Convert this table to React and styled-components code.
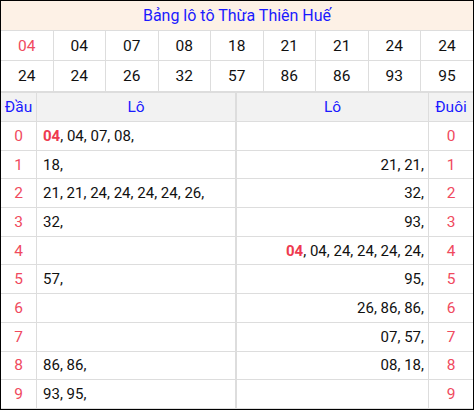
import styled, { createGlobalStyle } from "styled-components";

const GlobalStyle = createGlobalStyle`
  body {
    margin: 0;
    background: #fff;
    font-family: Roboto, "Liberation Sans", Arial, sans-serif;
  }
`;

const numbers = [
  ["04", "04", "07", "08", "18", "21", "21", "24", "24"],
  ["24", "24", "26", "32", "57", "86", "86", "93", "95"],
];

const hot = { v: "04", hot: true };

const rows = [
  { dau: [hot, "04", "07", "08"], duoi: [] },
  { dau: ["18"], duoi: ["21", "21"] },
  { dau: ["21", "21", "24", "24", "24", "24", "26"], duoi: ["32"] },
  { dau: ["32"], duoi: ["93"] },
  { dau: [], duoi: [hot, "04", "24", "24", "24", "24"] },
  { dau: ["57"], duoi: ["95"] },
  { dau: [], duoi: ["26", "86", "86"] },
  { dau: [], duoi: ["07", "57"] },
  { dau: ["86", "86"], duoi: ["08", "18"] },
  { dau: ["93", "95"], duoi: [] },
];

const LotoList = ({ items }) => (
  <span>
    {items.map((it, i) => {
      const v = typeof it === "string" ? it : it.v;
      return (
        <span key={i}>
          {it.hot ? <Hot>{v}</Hot> : v},{i < items.length - 1 ? " " : ""}
        </span>
      );
    })}
  </span>
);

const App = () => {
  return (
    <Frame>
      <GlobalStyle />
      <Title>Bảng lô tô Thừa Thiên Huế</Title>
      <NumberGrid>
        {numbers.flat().map((n, i) => (
          <NumCell key={i} $first={i === 0} $lastCol={i % 9 === 8}>
            {n}
          </NumCell>
        ))}
      </NumberGrid>
      <LotoGrid>
        <HeadCell>Đầu</HeadCell>
        <HeadCell>Lô</HeadCell>
        <HeadCell $split>Lô</HeadCell>
        <HeadCell $last>Đuôi</HeadCell>
        {rows.map((r, i) => [
          <DigitCell key={`a${i}`}>{i}</DigitCell>,
          <ListCell key={`b${i}`}>
            <LotoList items={r.dau} />
          </ListCell>,
          <ListCell key={`c${i}`} $right>
            <LotoList items={r.duoi} />
          </ListCell>,
          <DigitCell key={`d${i}`} $last>
            {i}
          </DigitCell>,
        ])}
      </LotoGrid>
    </Frame>
  );
};

export default App;

const Frame = styled.div`
  width: 474px;
  height: 410px;
  box-sizing: border-box;
  border: 1px solid #000;
  overflow: hidden;
  color: #111;
  font-size: 15px;
`;

const Title = styled.div`
  height: 29px;
  display: flex;
  align-items: center;
  justify-content: center;
  background: #fdf1e6;
  color: #1a1aff;
  font-size: 16px;
  border-bottom: 1px solid #ddd;
`;

const NumberGrid = styled.div`
  display: grid;
  grid-template-columns: repeat(8, 52.5px) 1fr;
  grid-auto-rows: 30px;
  border-bottom: 1px solid #ddd;
`;

const NumCell = styled.div`
  display: flex;
  align-items: center;
  justify-content: center;
  font-size: 15.5px;
  color: ${(p) => (p.$first ? "#f04a5e" : "#111")};
  border-right: ${(p) => (p.$lastCol ? "none" : "1px solid #ddd")};
  border-bottom: 1px solid #ddd;
  box-sizing: border-box;
  &:nth-last-child(-n + 9) {
    border-bottom: none;
  }
`;

const LotoGrid = styled.div`
  display: grid;
  grid-template-columns: 36px 199px 193px 1fr;
  grid-template-rows: 30px;
  grid-auto-rows: 28.7px;
`;

const Cell = styled.div`
  display: flex;
  align-items: center;
  box-sizing: border-box;
  border-bottom: 1px solid #ddd;
  border-right: ${(p) => (p.$last ? "none" : "1px solid #ddd")};
  white-space: nowrap;
`;

const HeadCell = styled(Cell)`
  justify-content: center;
  background: #f2f2f2;
  color: #1a1aff;
  font-size: 15.5px;
  border-top: 1px solid #ddd;
  border-left: ${(p) => (p.$split ? "1px solid #ddd" : "none")};
`;

const DigitCell = styled(Cell)`
  justify-content: center;
  color: #f04a5e;
  font-size: 15.5px;
`;

const ListCell = styled(Cell)`
  justify-content: ${(p) => (p.$right ? "flex-end" : "flex-start")};
  padding: ${(p) => (p.$right ? "0 4px 0 0" : "0 0 0 6px")};
  border-left: ${(p) => (p.$right ? "1px solid #ddd" : "none")};
`;

const Hot = styled.b`
  color: #ee3a4f;
  font-weight: 700;
`;
